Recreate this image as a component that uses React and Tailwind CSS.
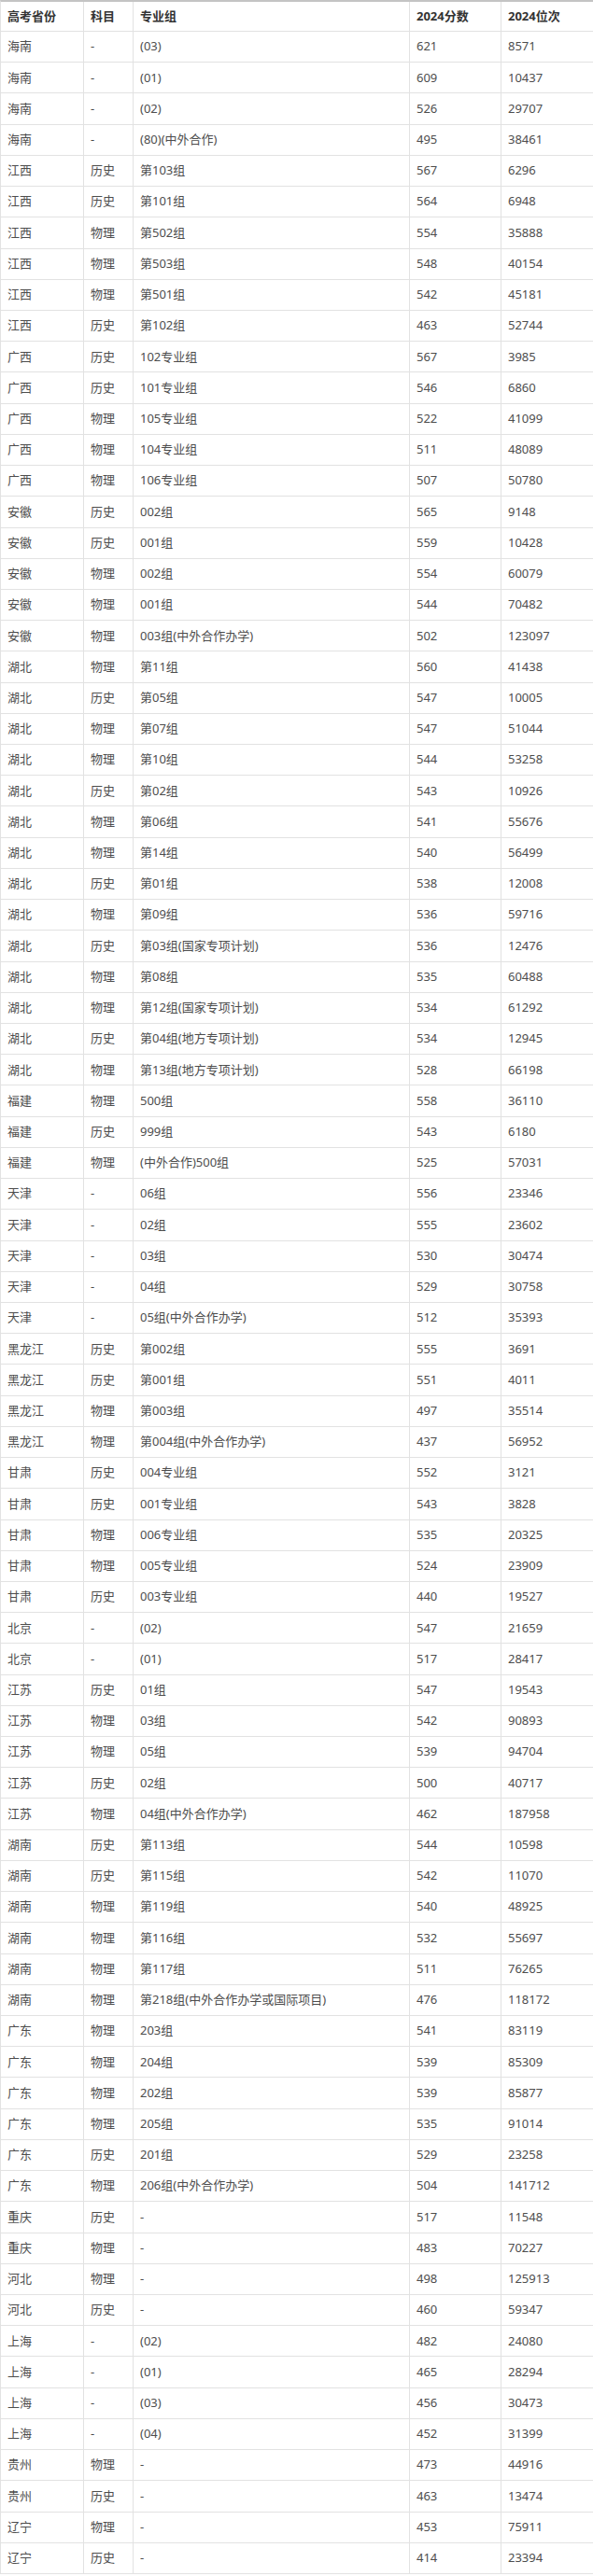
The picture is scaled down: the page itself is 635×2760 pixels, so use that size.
import React from "react";

const rows = [
  ["海南", "-", "(03)", "621", "8571"],
  ["海南", "-", "(01)", "609", "10437"],
  ["海南", "-", "(02)", "526", "29707"],
  ["海南", "-", "(80)(中外合作)", "495", "38461"],
  ["江西", "历史", "第103组", "567", "6296"],
  ["江西", "历史", "第101组", "564", "6948"],
  ["江西", "物理", "第502组", "554", "35888"],
  ["江西", "物理", "第503组", "548", "40154"],
  ["江西", "物理", "第501组", "542", "45181"],
  ["江西", "历史", "第102组", "463", "52744"],
  ["广西", "历史", "102专业组", "567", "3985"],
  ["广西", "历史", "101专业组", "546", "6860"],
  ["广西", "物理", "105专业组", "522", "41099"],
  ["广西", "物理", "104专业组", "511", "48089"],
  ["广西", "物理", "106专业组", "507", "50780"],
  ["安徽", "历史", "002组", "565", "9148"],
  ["安徽", "历史", "001组", "559", "10428"],
  ["安徽", "物理", "002组", "554", "60079"],
  ["安徽", "物理", "001组", "544", "70482"],
  ["安徽", "物理", "003组(中外合作办学)", "502", "123097"],
  ["湖北", "物理", "第11组", "560", "41438"],
  ["湖北", "历史", "第05组", "547", "10005"],
  ["湖北", "物理", "第07组", "547", "51044"],
  ["湖北", "物理", "第10组", "544", "53258"],
  ["湖北", "历史", "第02组", "543", "10926"],
  ["湖北", "物理", "第06组", "541", "55676"],
  ["湖北", "物理", "第14组", "540", "56499"],
  ["湖北", "历史", "第01组", "538", "12008"],
  ["湖北", "物理", "第09组", "536", "59716"],
  ["湖北", "历史", "第03组(国家专项计划)", "536", "12476"],
  ["湖北", "物理", "第08组", "535", "60488"],
  ["湖北", "物理", "第12组(国家专项计划)", "534", "61292"],
  ["湖北", "历史", "第04组(地方专项计划)", "534", "12945"],
  ["湖北", "物理", "第13组(地方专项计划)", "528", "66198"],
  ["福建", "物理", "500组", "558", "36110"],
  ["福建", "历史", "999组", "543", "6180"],
  ["福建", "物理", "(中外合作)500组", "525", "57031"],
  ["天津", "-", "06组", "556", "23346"],
  ["天津", "-", "02组", "555", "23602"],
  ["天津", "-", "03组", "530", "30474"],
  ["天津", "-", "04组", "529", "30758"],
  ["天津", "-", "05组(中外合作办学)", "512", "35393"],
  ["黑龙江", "历史", "第002组", "555", "3691"],
  ["黑龙江", "历史", "第001组", "551", "4011"],
  ["黑龙江", "物理", "第003组", "497", "35514"],
  ["黑龙江", "物理", "第004组(中外合作办学)", "437", "56952"],
  ["甘肃", "历史", "004专业组", "552", "3121"],
  ["甘肃", "历史", "001专业组", "543", "3828"],
  ["甘肃", "物理", "006专业组", "535", "20325"],
  ["甘肃", "物理", "005专业组", "524", "23909"],
  ["甘肃", "历史", "003专业组", "440", "19527"],
  ["北京", "-", "(02)", "547", "21659"],
  ["北京", "-", "(01)", "517", "28417"],
  ["江苏", "历史", "01组", "547", "19543"],
  ["江苏", "物理", "03组", "542", "90893"],
  ["江苏", "物理", "05组", "539", "94704"],
  ["江苏", "历史", "02组", "500", "40717"],
  ["江苏", "物理", "04组(中外合作办学)", "462", "187958"],
  ["湖南", "历史", "第113组", "544", "10598"],
  ["湖南", "历史", "第115组", "542", "11070"],
  ["湖南", "物理", "第119组", "540", "48925"],
  ["湖南", "物理", "第116组", "532", "55697"],
  ["湖南", "物理", "第117组", "511", "76265"],
  ["湖南", "物理", "第218组(中外合作办学或国际项目)", "476", "118172"],
  ["广东", "物理", "203组", "541", "83119"],
  ["广东", "物理", "204组", "539", "85309"],
  ["广东", "物理", "202组", "539", "85877"],
  ["广东", "物理", "205组", "535", "91014"],
  ["广东", "历史", "201组", "529", "23258"],
  ["广东", "物理", "206组(中外合作办学)", "504", "141712"],
  ["重庆", "历史", "-", "517", "11548"],
  ["重庆", "物理", "-", "483", "70227"],
  ["河北", "物理", "-", "498", "125913"],
  ["河北", "历史", "-", "460", "59347"],
  ["上海", "-", "(02)", "482", "24080"],
  ["上海", "-", "(01)", "465", "28294"],
  ["上海", "-", "(03)", "456", "30473"],
  ["上海", "-", "(04)", "452", "31399"],
  ["贵州", "物理", "-", "473", "44916"],
  ["贵州", "历史", "-", "463", "13474"],
  ["辽宁", "物理", "-", "453", "75911"],
  ["辽宁", "历史", "-", "414", "23394"],
];

const headers = ["高考省份", "科目", "专业组", "2024分数", "2024位次"];

const Row = ({ cells, head }) => (
  <div
    className={
      "grid grid-cols-[89px_53px_296px_98px_1fr] border-b border-[#e2e2e2] " +
      (head ? "h-[32px]" : "h-[33.23px]")
    }
  >
    {cells.map((c, i) => (
      <div
        key={i}
        className={
          "flex items-center pl-[7px] whitespace-nowrap overflow-hidden " +
          (i < 4 ? "border-r border-[#e2e2e2]" : "")
        }
      >
        {c}
      </div>
    ))}
  </div>
);

export default function App() {
  return (
    <div
      className="w-[635px] bg-white text-[13px] text-[#4d4d4d]"
      style={{ fontFamily: '"Noto Sans", "Noto Sans CJK SC", sans-serif' }}
    >
      <div className="border-t-2 border-l border-t-[#c4c4c4] border-l-[#e2e2e2]">
        {/* header */}
        <div className="font-bold text-[#333]">
          <Row cells={headers} head />
        </div>
        {rows.map((r, i) => (
          <Row key={i} cells={r} />
        ))}
      </div>
    </div>
  );
}
